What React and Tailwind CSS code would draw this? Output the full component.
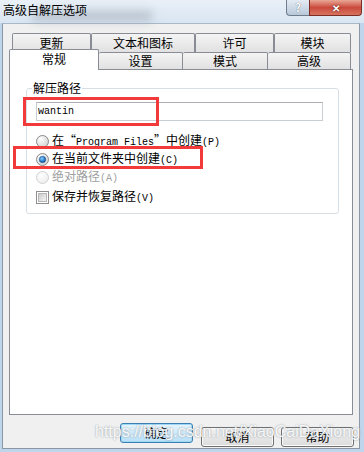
import { useId } from "react";

function Radio({ checked, disabled }) {
  const id = useId().replace(/:/g, "");
  return (
    <svg width="13" height="13" viewBox="0 0 13 13" className="shrink-0">
      <defs>
        <radialGradient id={`f${id}`} cx="0.35" cy="0.3" r="0.8">
          <stop offset="0" stopColor="#ffffff" />
          <stop offset="1" stopColor={disabled ? "#ececec" : "#cfcfcf"} />
        </radialGradient>
        <radialGradient id={`d${id}`} cx="0.4" cy="0.35" r="0.7">
          <stop offset="0" stopColor="#8fd0ff" />
          <stop offset="0.6" stopColor="#2a7fd0" />
          <stop offset="1" stopColor="#0f4e8e" />
        </radialGradient>
      </defs>
      <circle
        cx="6.5"
        cy="6.5"
        r="6"
        fill={`url(#f${id})`}
        stroke={disabled ? "#d0d0d0" : "#8a8a8a"}
      />
      {checked && <circle cx="6.5" cy="6.5" r="3.2" fill={`url(#d${id})`} stroke="#1c4f84" strokeWidth="0.6" />}
    </svg>
  );
}

function Checkbox() {
  return (
    <span className="w-[13px] h-[13px] shrink-0 border border-[#8e8f8f] bg-white flex items-center justify-center">
      <span className="w-[9px] h-[9px] border border-[#b7b7b7] bg-linear-to-br from-[#cbcbcb] to-[#f6f6f6]" />
    </span>
  );
}

function BackTab({ w, children }) {
  return (
    <div
      className={`${w} h-[19px] border border-b-0 border-[#898c95] rounded-t-[2px] bg-linear-to-b from-[#f4f4f4] to-[#e1e1e1] flex justify-center pt-[1px] text-[12px] leading-[16px] text-black`}
    >
      {children}
    </div>
  );
}

function Btn({ children, primary }) {
  return (
    <button
      className={
        primary
          ? "w-[73px] h-[20px] rounded-[3px] border border-[#3c7fb1] bg-linear-to-b from-[#e8f5fc] to-[#b7dff7] shadow-[inset_0_0_0_1px_#9fd8f6] text-[12px] leading-[16px] text-black"
          : "w-[73px] h-[20px] rounded-[3px] border border-[#707070] bg-linear-to-b from-[#f3f3f3] to-[#dcdcdc] shadow-[inset_0_0_0_1px_#fbfbfb] text-[12px] leading-[16px] text-black"
      }
    >
      {children}
    </button>
  );
}

function Mono({ children }) {
  return <span className="font-['Liberation_Mono',monospace] text-[10px]">{children}</span>;
}

export default function App() {
  return (
    <div className="relative w-[364px] h-[452px] overflow-hidden bg-[#bfd5ec] flex flex-col font-['Noto_Sans_CJK_SC','Liberation_Sans',sans-serif]">
      {/* title bar */}
      <div className="relative h-[23px] flex items-start bg-linear-to-b from-[#e9f0f7] to-[#d9e5f1]">
        <div className="absolute left-[32px] top-[10px] w-[120px] h-[12px] bg-[#8e99a6]/40 blur-[4px]" />
        <span className="relative ml-[3px] mt-[3px] text-[12px] leading-[14px] text-black">
          高级自解压选项
        </span>
        <div className="ml-auto mr-[2px] flex">
          <div className="w-[23px] h-[16px] border border-t-0 border-r-0 border-[#6f7c8c] rounded-bl-[4px] bg-linear-to-b from-[#e4ebf3] to-[#b9c8d9] flex items-center justify-center text-[11px] leading-none font-bold text-white [text-shadow:0_0_1px_#40505f]">
            ?
          </div>
          <div className="w-[53px] h-[16px] border border-t-0 border-[#7a2e26] rounded-br-[4px] bg-linear-to-b from-[#e8a796] via-[#c9493c] to-[#d77360] flex items-center justify-center text-[10px] leading-none font-bold text-white [text-shadow:0_0_2px_#4a1410]">
            ✕
          </div>
        </div>
      </div>

      {/* client */}
      <div className="ml-[2px] mr-[4px] mb-[3px] flex-1 border border-[#8b97a5] border-t-[#a9b8c8] bg-[#f0f0f0] flex flex-col px-[6px] pt-[9px]">
        {/* back tab row */}
        <div className="flex pl-[3px]">
          <BackTab w="w-[79px]">更新</BackTab>
          <BackTab w="w-[104px]">文本和图标</BackTab>
          <BackTab w="w-[79px]">许可</BackTab>
          <BackTab w="w-[77px]">模块</BackTab>
        </div>
        {/* front tab row */}
        <div className="flex items-end h-[17px]">
          <div className="relative z-10 w-[90px] h-[21px] -mb-px border border-b-0 border-[#898c95] rounded-t-[2px] bg-white flex justify-center text-[12px] leading-[16px] pt-[1px]">
            常规
          </div>
          <div className="w-[84px] h-[17px] border border-b-0 border-l-0 border-[#898c95] rounded-t-[2px] bg-linear-to-b from-[#f4f4f4] to-[#e1e1e1] flex justify-center text-[12px] leading-[16px]">
            设置
          </div>
          <div className="w-[85px] h-[17px] border border-b-0 border-l-0 border-[#898c95] rounded-t-[2px] bg-linear-to-b from-[#f4f4f4] to-[#e1e1e1] flex justify-center text-[12px] leading-[16px]">
            模式
          </div>
          <div className="w-[83px] h-[17px] border border-b-0 border-l-0 border-[#898c95] rounded-t-[2px] bg-linear-to-b from-[#f4f4f4] to-[#e1e1e1] flex justify-center text-[12px] leading-[16px]">
            高级
          </div>
        </div>

        {/* panel */}
        <div className="h-[346px] w-[344px] border border-[#898c95] bg-white pt-[11px] pl-[16px]">
          <fieldset className="w-[313px] border border-[#d5dfe5] rounded-[3px] pl-[5px] pb-[7px]">
            <legend className="px-[1px] text-[12px] leading-[14px] text-black">解压路径</legend>
            <div className="ml-[4px] mt-[7px] w-[287px] h-[19px] border border-[#c9ced4] border-t-[#abadb3] bg-white flex items-center pl-[1px]">
              <span className="font-['Liberation_Mono',monospace] text-[10px] leading-[12px] text-black">wantin</span>
            </div>
            <div className="ml-[4px] mt-[11px] flex flex-col text-[12px] leading-[14px] text-black">
              <label className="h-[18px] flex items-center gap-[3px]">
                <Radio />
                <span>
                  在“<Mono>Program Files</Mono>”中创建<Mono>(P)</Mono>
                </span>
              </label>
              <label className="h-[18px] flex items-center gap-[3px]">
                <Radio checked />
                <span>
                  在当前文件夹中创建<Mono>(C)</Mono>
                </span>
              </label>
              <label className="h-[18px] flex items-center gap-[3px] text-[#a0a0a0]">
                <Radio disabled />
                <span>
                  绝对路径<Mono>(A)</Mono>
                </span>
              </label>
              <label className="mt-[2px] h-[18px] flex items-center gap-[3px]">
                <Checkbox />
                <span>
                  保存并恢复路径<Mono>(V)</Mono>
                </span>
              </label>
            </div>
          </fieldset>
        </div>

        {/* buttons */}
        <div className="mt-[8px] flex justify-end">
          <div className="flex -mr-px">
            <Btn primary>确定</Btn>
            <div className="ml-[8px]">
              <Btn>取消</Btn>
            </div>
            <div className="ml-[7px]">
              <Btn>帮助</Btn>
            </div>
          </div>
        </div>
      </div>

      {/* annotations */}
      <div className="absolute left-[23px] top-[97px] w-[136px] h-[29px] border-[3px] border-[#f23a3a]" />
      <div className="absolute left-[13px] top-[146px] w-[190px] h-[23px] border-[3px] border-[#f23a3a]" />
      <div className="pointer-events-none absolute left-[95px] top-[423px] font-['Liberation_Sans',sans-serif] text-[16px] leading-[18px] text-white/90 [text-shadow:0_0_2px_rgba(110,120,130,0.8)] whitespace-nowrap">
        https://blog.csdn.net/XiaoCaiDaXiong
      </div>
    </div>
  );
}
